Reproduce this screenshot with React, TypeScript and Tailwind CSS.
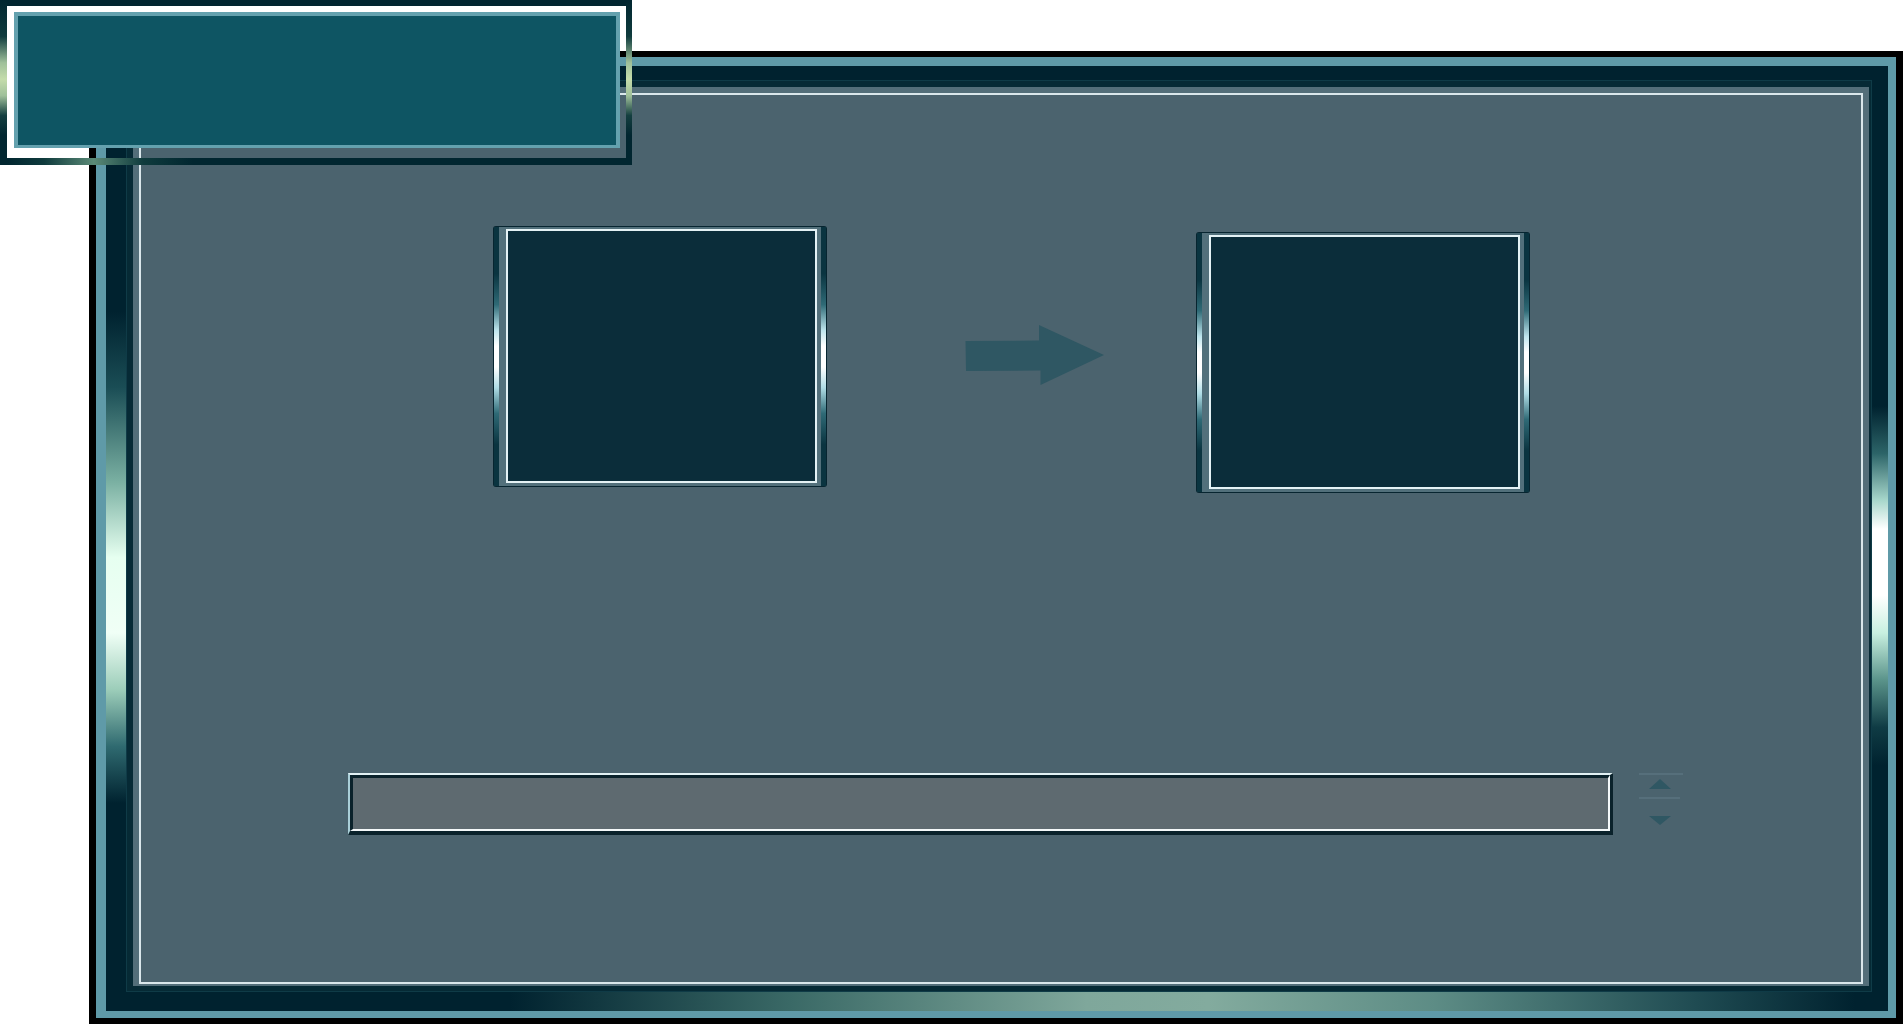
import React from "react";

function PictureBox({ className = "" }: { className?: string }) {
  const glow =
    "w-[5px] shrink-0 bg-[linear-gradient(to_bottom,#0a3440_0%,#0a3440_18%,#2f6a76_30%,#bfe6ee_40%,#ffffff_46%,#ffffff_54%,#b0dde6_62%,#2f6a76_72%,#0a3440_84%,#0a3440_100%)]";
  return (
    <div className={`w-[334px] h-[261px] shrink-0 rounded-[3px] bg-[#072530] p-[1px] flex ${className}`}>
      <div className={glow} />
      <div className="flex-1 bg-[#52707b] pt-[2px] pb-[3px] pl-[7px] pr-[4px] flex">
        <div className="flex-1 border-2 border-[#e4f2f5] bg-[#0b2d3a]" />
      </div>
      <div className={glow} />
    </div>
  );
}

export default function App() {
  return (
    <div className="relative w-[1904px] h-[1025px] bg-white overflow-hidden font-['Liberation_Sans',sans-serif]">
      {/* Main frame */}
      <div className="ml-[89px] pt-[51px]">
        <div className="w-[1814px] h-[973px] bg-black pl-[7px] pt-[6px] pr-[7px] pb-[6px] flex">
          <div className="flex-1 bg-[#5f9aa8] pl-[10px] pt-[9px] pr-[8px] pb-[7px] flex">
            <div className="flex-1 flex bg-[#00222f]">
              {/* left glow strip */}
              <div className="w-[20px] shrink-0 bg-[linear-gradient(to_bottom,#00222f_0%,#00222f_26%,#1a4d55_34%,#7ab0a2_44%,#e6fff0_52%,#f0fff6_60%,#9ccdb9_66%,#2f6a70_72%,#00222f_78%,#00222f_100%)]" />
              <div className="flex-1 flex flex-col">
                <div className="h-[14px] shrink-0 bg-[#00222f]" />
                <div className="flex-1 flex border border-[#0f3b47] bg-[#062a35] pl-[6px] pt-[6px] pr-[2px] pb-[5px]">
                  <div className="flex-1 flex bg-[#536e79] pl-[6px] pt-[6px] pr-[6px] pb-[2px]">
                    <div className="flex-1 border-2 border-[#dae7eb] bg-[#4b636e] flex flex-col pt-[131px]">
                      {/* row 1 */}
                      <div className="flex items-start pl-[352px]">
                        <PictureBox />
                        <svg
                          className="ml-[138px] mt-[99px] shrink-0"
                          width="139"
                          height="60"
                          viewBox="0 0 139 60"
                        >
                          <polygon
                            points="0.5,16 74,15.5 74,0 139,30 75.5,60 75.5,45.5 1,46"
                            fill="#2f5763"
                          />
                        </svg>
                        <PictureBox className="ml-[92px] mt-[6px]" />
                      </div>
                      {/* row 2 */}
                      <div className="flex items-start pl-[207px] mt-[280px]">
                        <div className="w-[1265px] h-[62px] shrink-0 border-t-2 border-l-2 border-r-[3px] border-b-[4px] border-t-[#e2f1f4] border-l-[#a9cfd8] border-r-[#0a222b] border-b-[#0a222b] flex">
                          <div className="flex-1 border-t-[3px] border-l-[3px] border-r-2 border-b-2 border-t-[#0a222b] border-l-[#0a222b] border-r-[#f4f8f9] border-b-[#f4f8f9] bg-[#5e6a70]" />
                        </div>
                        <svg className="ml-[26px] shrink-0" width="44" height="53" viewBox="0 0 44 53">
                          <rect x="0" y="0.5" width="44" height="1" fill="#637d88" />
                          <polygon points="10,16 32,16 21,6" fill="#2f5763" />
                          <rect x="0" y="24.5" width="41" height="1" fill="#637d88" />
                          <polygon points="10,43 32,43 21,52" fill="#2f5763" />
                        </svg>
                      </div>
                    </div>
                  </div>
                </div>
                <div className="h-[19px] shrink-0 bg-[linear-gradient(to_right,#00222f_0%,#00222f_22%,#3a6966_38%,#7fa79b_55%,#83ab9e_62%,#5d8c85_75%,#1f4b52_90%,#00222f_99%)]" />
              </div>
              {/* right glow strip */}
              <div className="w-[16px] shrink-0 bg-[linear-gradient(to_bottom,#00222f_0%,#00222f_36%,#2c6468_41%,#a8d8cc_46%,#ffffff_49%,#ffffff_56%,#c8f0e0_60%,#5a938a_65%,#0f3b44_70%,#00222f_74%,#00222f_100%)]" />
            </div>
          </div>
        </div>
      </div>

      {/* Title box overlay */}
      <div className="absolute left-0 top-0 w-[632px] h-[165px] flex">
        <div className="w-[7px] shrink-0 bg-[linear-gradient(to_bottom,#012630_0%,#0f3b3d_22%,#9fc09a_38%,#c4dcaa_48%,#9fc09a_58%,#143f40_70%,#012630_82%,#012630_100%)]" />
        <div className="flex-1 flex flex-col">
          <div className="h-[6px] shrink-0 bg-[#012630]" />
          <div className="flex-1 flex pl-[7px] pt-[6px] pr-[6px] pb-[10px]">
            <div className="flex-1 border-[#64a1ae] border-t-4 border-l-4 border-r-[4px] border-b-[3px] bg-[#0e5563]" />
          </div>
          <div className="h-[7px] shrink-0 bg-[linear-gradient(to_right,#012630_0%,#0f3b3d_6%,#5b8a77_14%,#0f3b3d_22%,#012630_30%,#012630_100%)]" />
        </div>
        <div className="w-[6px] shrink-0 bg-[linear-gradient(to_bottom,#012630_0%,#0f3b3d_22%,#9fc09a_38%,#c4dcaa_48%,#9fc09a_58%,#143f40_70%,#012630_82%,#012630_100%)]" />
      </div>
    </div>
  );
}
